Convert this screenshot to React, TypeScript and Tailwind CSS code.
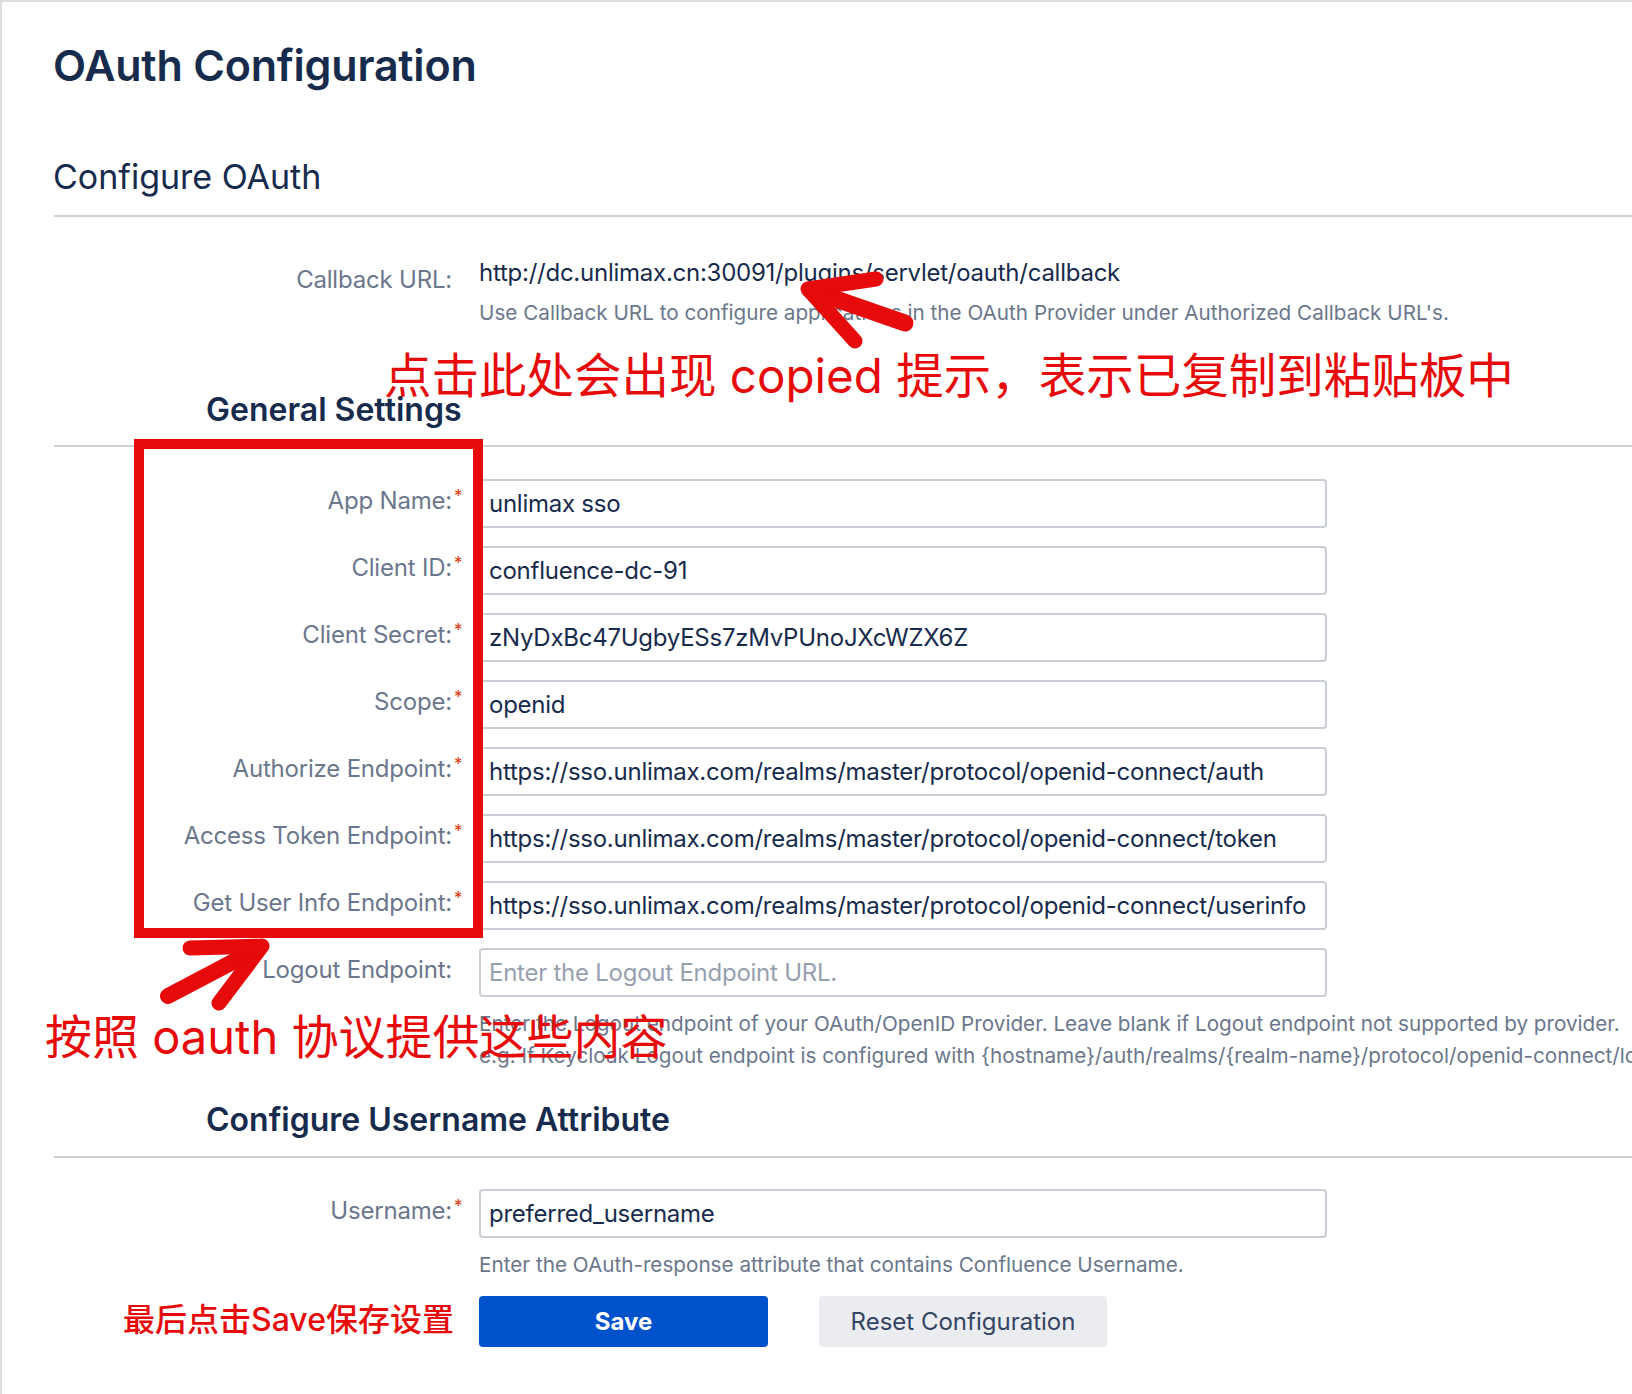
import React from 'react';

const FIELDS = [
  { label: 'App Name:', value: 'unlimax sso' },
  { label: 'Client ID:', value: 'confluence-dc-91' },
  { label: 'Client Secret:', value: 'zNyDxBc47UgbyESs7zMvPUnoJXcWZX6Z' },
  { label: 'Scope:', value: 'openid' },
  { label: 'Authorize Endpoint:', value: 'https://sso.unlimax.com/realms/master/protocol/openid-connect/auth' },
  { label: 'Access Token Endpoint:', value: 'https://sso.unlimax.com/realms/master/protocol/openid-connect/token' },
  { label: 'Get User Info Endpoint:', value: 'https://sso.unlimax.com/realms/master/protocol/openid-connect/userinfo' },
];

const Row: React.FC<{ label: string; required?: boolean; children: React.ReactNode }> = ({ label, required, children }) => (
  <div className="flex items-start">
    <div className="w-[450px] pt-[6px] text-right text-[24px] leading-[32px] tracking-[-0.2px] text-[#6b778c]">
      <span className="relative">
        {label}
        {required && <span className="absolute left-full top-[-6px] ml-[2px] text-[17px] text-[#de350b]">*</span>}
      </span>
    </div>
    {children}
  </div>
);

const Field: React.FC<{ value?: string; placeholder?: string }> = ({ value, placeholder }) => (
  <div className="ml-[27px] flex h-[49px] w-[848px] items-center whitespace-nowrap rounded-[4px] border-2 border-[#c9ced6] bg-white px-[8px] text-[24px] leading-[32px] tracking-[-0.25px]">
    {value ? <span className="text-[#172b4d]">{value}</span> : <span className="text-[#97a0af]">{placeholder}</span>}
  </div>
);

export default function App() {
  return (
    <div className="relative h-[1394px] w-[1632px] overflow-hidden border-l-2 border-t-2 border-[#dcdcdc] bg-white font-['Inter','Noto_Sans_CJK_SC',sans-serif]">
      <h1 className="ml-[51px] mt-[38px] text-[43px] font-semibold leading-[50px] tracking-[-0.2px] text-[#172b4d]">OAuth Configuration</h1>
      <h2 className="ml-[51px] mt-[67px] text-[34px] leading-[40px] text-[#172b4d]">Configure OAuth</h2>
      <div className="ml-[52px] mt-[18px] h-[2px] bg-[#d2d2d2]" />

      {/* callback url */}
      <div className="mt-[40px] flex items-start">
        <div className="w-[450px] pt-[7px] text-right text-[24px] leading-[32px] tracking-[-0.2px] text-[#6b778c]">Callback URL:</div>
        <div className="ml-[27px]">
          <div className="text-[24px] leading-[32px] tracking-[-0.25px] text-[#172b4d]">http://dc.unlimax.cn:30091/plugins/servlet/oauth/callback</div>
          <div className="mt-[10px] text-[20.7px] leading-[28px] text-[#6b778c]">
            Use Callback URL to configure applications in the OAuth Provider under Authorized Callback URL's.
          </div>
        </div>
      </div>

      <h3 className="ml-[204px] mt-[63px] text-[32px] font-semibold leading-[40px] text-[#172b4d]">General Settings</h3>
      <div className="ml-[52px] mt-[15px] h-[2px] bg-[#d2d2d2]" />

      <div className="mt-[32px] flex flex-col gap-[18px]">
        {FIELDS.map((f) => (
          <Row key={f.label} label={f.label} required>
            <Field value={f.value} />
          </Row>
        ))}
        <Row label="Logout Endpoint:">
          <Field placeholder="Enter the Logout Endpoint URL." />
        </Row>
      </div>
      <div className="ml-[477px] mt-[11px] whitespace-nowrap text-[20.7px] leading-[32px] text-[#6b778c]">
        <div>Enter the Logout endpoint of your OAuth/OpenID Provider. Leave blank if Logout endpoint not supported by provider.</div>
        <div>e.g. If Keycloak Logout endpoint is configured with {'{hostname}'}/auth/realms/{'{realm-name}'}/protocol/openid-connect/logout</div>
      </div>

      <h3 className="ml-[204px] mt-[28px] text-[32px] font-semibold leading-[40px] text-[#172b4d]">Configure Username Attribute</h3>
      <div className="ml-[52px] mt-[16px] h-[2px] bg-[#d2d2d2]" />

      <div className="mt-[31px]">
        <Row label="Username:" required>
          <Field value="preferred_username" />
        </Row>
      </div>
      <div className="ml-[477px] mt-[13px] text-[20.7px] leading-[28px] text-[#6b778c]">
        Enter the OAuth-response attribute that contains Confluence Username.
      </div>
      <div className="ml-[477px] mt-[17px] flex gap-[51px]">
        <button className="h-[51px] w-[289px] rounded-[4px] bg-[#0052cc] text-[24px] font-bold text-white">Save</button>
        <button className="h-[51px] w-[288px] rounded-[4px] bg-[#ebecf0] text-[24px] text-[#344563]">Reset Configuration</button>
      </div>

      {/* annotations */}
      <div className="pointer-events-none absolute left-[132px] top-[437px] h-[499px] w-[349px] border-[10px] border-[#e60a0a]" />
      <div className="absolute left-[382px] top-[350px] whitespace-nowrap text-[47.5px] leading-none text-[#e60a0a]">
        点击此处会出现 copied 提示，表示已复制到粘贴板中
      </div>
      <div className="absolute left-[43px] top-[1011px] whitespace-nowrap text-[47px] leading-none text-[#e60a0a]">
        按照 oauth 协议提供这些内容
      </div>
      <div className="absolute left-[121px] top-[1302px] whitespace-nowrap text-[32px] font-medium leading-none text-[#e60a0a]">
        最后点击Save保存设置
      </div>
      <svg className="pointer-events-none absolute left-[-2px] top-[-2px]" width="1632" height="1394" viewBox="0 0 1632 1394">
        <g stroke="#e60a0a" strokeLinecap="round" strokeLinejoin="round" fill="none">
          <path d="M905 323 L810 290" strokeWidth="17" />
          <path d="M808 289 L876 279 M808 289 L855 341" strokeWidth="15" />
          <path d="M168 996 L259 948" strokeWidth="16" />
          <path d="M262 946 L190 948 M262 946 L219 1003" strokeWidth="15" />
        </g>
      </svg>
    </div>
  );
}
